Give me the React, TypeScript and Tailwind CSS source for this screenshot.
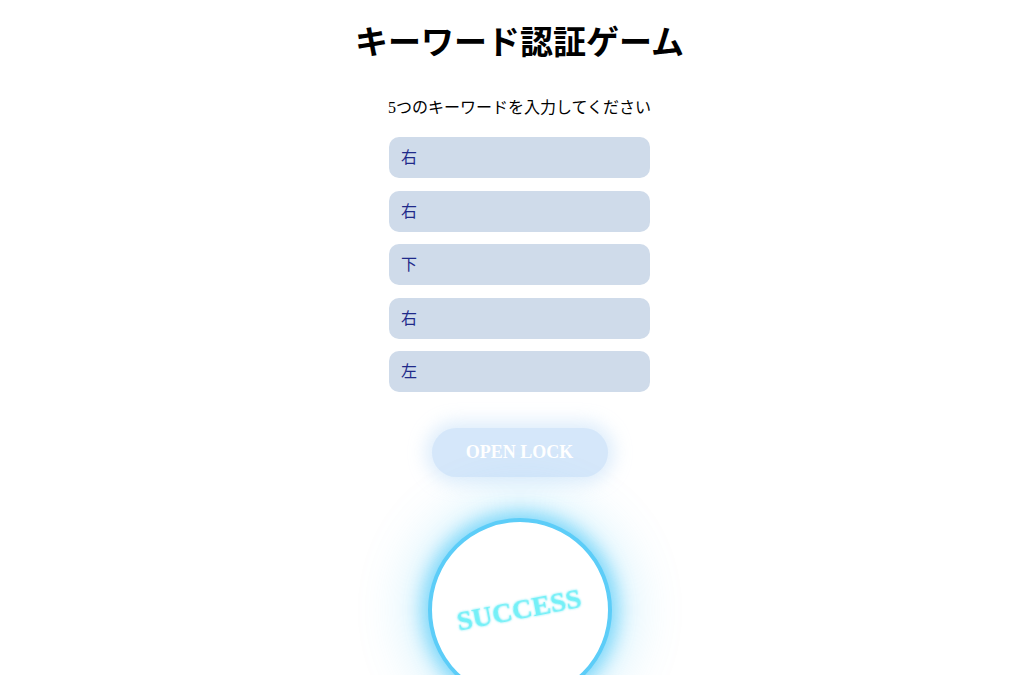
export default function App() {
  const keywords = ["右", "右", "下", "右", "左"];

  return (
    <div className="min-h-screen bg-white flex flex-col items-center pl-[15px] font-['Liberation_Serif','Noto_Sans_CJK_JP',serif] overflow-hidden">
      <h1 className="pt-[24px] text-[33px] leading-[38px] font-bold text-black">
        キーワード認証ゲーム
      </h1>
      <p className="mt-[34px] text-[16px] leading-[24px] text-black">
        5つのキーワードを入力してください
      </p>

      <div className="mt-[17px] flex flex-col gap-[12.5px]">
        {keywords.map((k, i) => (
          <input
            key={i}
            type="text"
            defaultValue={k}
            className="w-[261px] h-[41px] rounded-[10px] bg-[#cfdbea] px-3 pb-[3px] text-[16px] text-[#1f2a8a] outline-none"
          />
        ))}
      </div>

      <button className="mt-[36px] w-[176px] h-[49px] rounded-full bg-[#d5e7fa] text-white text-[18px] font-bold shadow-[0_0_18px_6px_rgba(205,228,250,0.7)]">
        OPEN LOCK
      </button>

      <div className="mt-[41px] w-[184px] h-[184px] shrink-0 rounded-full border-4 border-[#5ccdf8] bg-white flex items-center justify-center shadow-[0_0_18px_6px_rgba(92,205,248,0.75),0_0_50px_20px_rgba(92,205,248,0.25)]">
        <span className="-rotate-[11deg] text-[28px] font-bold text-[#74f0f7] drop-shadow-[0_0_1px_rgba(90,230,246,0.8)]">
          SUCCESS
        </span>
      </div>
    </div>
  );
}
